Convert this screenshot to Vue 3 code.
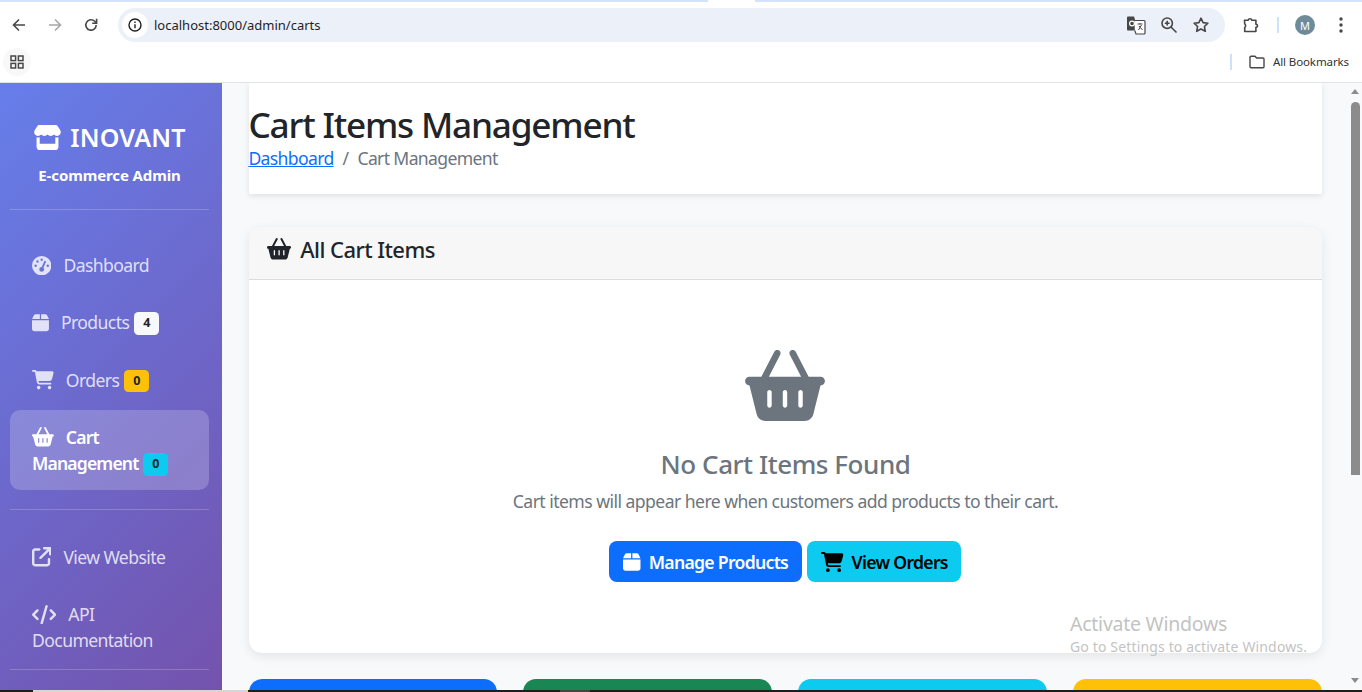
<script setup>
const I = {
  store: { w: 576, d: 'M547.6 103.8L490.3 13.1C485.2 5 476.1 0 466.4 0H109.6C99.9 0 90.8 5 85.7 13.1L28.3 103.8c-29.6 46.8-3.4 111.9 51.9 119.4c4 .5 8.1 .8 12.1 .8c26.1 0 49.3-11.4 65.2-29c15.9 17.6 39.1 29 65.2 29c26.1 0 49.3-11.4 65.2-29c15.9 17.6 39.1 29 65.2 29c26.2 0 49.3-11.4 65.2-29c16 17.6 39.1 29 65.2 29c4.1 0 8.1-.3 12.1-.8c55.5-7.4 81.8-72.5 52.1-119.4zM499.7 254.9l-.1 0c-5.3 .7-10.7 1.1-16.2 1.1c-12.4 0-24.3-1.9-35.4-5.3V384H128V250.6c-11.2 3.5-23.2 5.4-35.6 5.4c-5.5 0-11-.4-16.3-1.1l-.1 0c-4.1-.6-8.1-1.3-12-2.3V384v64c0 35.3 28.7 64 64 64H448c35.3 0 64-28.7 64-64V384 252.6c-4 1-8 1.8-12.3 2.3z' },
  gauge: { w: 512, d: 'M0 256a256 256 0 1 1 512 0A256 256 0 1 1 0 256zM288 96a32 32 0 1 0 -64 0 32 32 0 1 0 64 0zM256 416c35.3 0 64-28.7 64-64c0-17.4-6.9-33.1-18.1-44.6L366 161.7c5.3-12.1-.2-26.3-12.3-31.6s-26.3 .2-31.6 12.3L257.9 288c-.6 0-1.3 0-1.9 0c-35.3 0-64 28.7-64 64s28.7 64 64 64zM176 144a32 32 0 1 0 -64 0 32 32 0 1 0 64 0zM96 288a32 32 0 1 0 0-64 32 32 0 1 0 0 64zm352-32a32 32 0 1 0 -64 0 32 32 0 1 0 64 0z' },
  box: { w: 448, d: 'M50.7 58.5L0 160H208V32H93.7C75.5 32 58.9 42.3 50.7 58.5zM240 160H448L397.3 58.5C389.1 42.3 372.5 32 354.3 32H240V160zm208 32H0V416c0 35.3 28.7 64 64 64H384c35.3 0 64-28.7 64-64V192z' },
  cart: { w: 576, d: 'M0 24C0 10.7 10.7 0 24 0H69.5c22 0 41.5 12.8 50.6 32h411c26.3 0 45.5 25 38.6 50.4l-41 152.3c-8.5 31.4-37 53.3-69.5 53.3H170.7l5.4 28.5c2.2 11.3 12.1 19.5 23.6 19.5H488c13.3 0 24 10.7 24 24s-10.7 24-24 24H199.7c-34.6 0-64.3-24.6-70.7-58.5L77.4 54.5c-.7-3.8-4-6.5-7.9-6.5H24C10.7 48 0 37.3 0 24zM128 464a48 48 0 1 1 96 0 48 48 0 1 1 -96 0zm336-48a48 48 0 1 1 0 96 48 48 0 1 1 0-96z' },
  basket: { w: 576, d: 'M253.3 35.1c6.1-11.8 1.5-26.3-10.2-32.4s-26.3-1.5-32.4 10.2L117.6 192H32c-17.7 0-32 14.3-32 32s14.3 32 32 32L83.9 463.5C91 492 116.6 512 146 512H430c29.4 0 55-20 62.1-48.5L544 256c17.7 0 32-14.3 32-32s-14.3-32-32-32H458.4L365.3 12.9C359.2 1.2 344.7-3.4 332.9 2.7s-16.3 20.6-10.2 32.4L404.3 192H171.7L253.3 35.1zM192 304v96c0 8.8-7.2 16-16 16s-16-7.2-16-16V304c0-8.8 7.2-16 16-16s16 7.2 16 16zm96-16c8.8 0 16 7.2 16 16v96c0 8.8-7.2 16-16 16s-16-7.2-16-16V304c0-8.8 7.2-16 16-16zm128 16v96c0 8.8-7.2 16-16 16s-16-7.2-16-16V304c0-8.8 7.2-16 16-16s16 7.2 16 16z' },
  link: { w: 512, d: 'M320 0c-17.7 0-32 14.3-32 32s14.3 32 32 32h82.7L201.4 265.4c-12.5 12.5-12.5 32.8 0 45.3s32.8 12.5 45.3 0L448 109.3V192c0 17.7 14.3 32 32 32s32-14.3 32-32V32c0-17.7-14.3-32-32-32H320zM80 32C35.8 32 0 67.8 0 112V432c0 44.2 35.8 80 80 80H400c44.2 0 80-35.8 80-80V320c0-17.7-14.3-32-32-32s-32 14.3-32 32V432c0 8.8-7.2 16-16 16H80c-8.8 0-16-7.2-16-16V112c0-8.8 7.2-16 16-16H192c17.7 0 32-14.3 32-32s-14.3-32-32-32H80z' },
  code: { w: 640, d: 'M392.8 1.2c-17-4.9-34.7 5-39.6 22l-128 448c-4.9 17 5 34.7 22 39.6s34.7-5 39.6-22l128-448c4.9-17-5-34.7-22-39.6zm80.6 120.1c-12.5 12.5-12.5 32.8 0 45.3L562.7 256l-89.4 89.4c-12.5 12.5-12.5 32.8 0 45.3s32.8 12.5 45.3 0l112-112c12.5-12.5 12.5-32.8 0-45.3l-112-112c-12.5-12.5-32.8-12.5-45.3 0zm-306.7 0c-12.5-12.5-32.8-12.5-45.3 0l-112 112c-12.5 12.5-12.5 32.8 0 45.3l112 112c12.5 12.5 32.8 12.5 45.3 0s12.5-32.8 0-45.3L77.3 256l89.4-89.4c12.5-12.5 12.5-32.8 0-45.3z' }
}
const mainNav = [
  { label: 'Dashboard', icon: I.gauge },
  { label: 'Products', icon: I.box, badge: '4', tone: 'b-light' },
  { label: 'Orders', icon: I.cart, badge: '0', tone: 'b-warn' },
  { label: 'Cart Management', icon: I.basket, badge: '0', tone: 'b-cyan', active: true }
]
const extraNav = [
  { label: 'View Website', icon: I.link },
  { label: 'API Documentation', icon: I.code }
]
const stats = ['#0d6efd', '#198754', '#0dcaf0', '#ffc107']
</script>

<template>
  <div class="screen">
    <div class="tabstrip"><span class="tabgap"></span></div>
    <div class="toolbar">
      <svg class="tb" width="16" height="16" viewBox="0 0 16 16" fill="none" stroke="#474747" stroke-width="1.6"><path d="M14 8H2.5M8 2.5L2.5 8 8 13.5"/></svg>
      <svg class="tb" width="16" height="16" viewBox="0 0 16 16" fill="none" stroke="#a8a8a8" stroke-width="1.6"><path d="M2 8h11.5M8 2.5L13.5 8 8 13.5"/></svg>
      <svg class="tb" width="16" height="16" viewBox="0 0 16 16" fill="none" stroke="#474747" stroke-width="1.6"><path d="M13.2 8a5.2 5.2 0 1 1-1.5-3.7L13.4 6"/><path d="M13.6 1.8V6.2H9.2" /></svg>
      <div class="omni">
        <span class="info"><svg width="16" height="16" viewBox="0 0 16 16" fill="none" stroke="#1f1f1f" stroke-width="1.4"><circle cx="8" cy="8" r="6"/><path d="M8 7.2v4M8 4.4v1.5"/></svg></span>
        <span class="url">localhost:8000/admin/carts</span>
        <span class="omni-icons">
          <svg width="20" height="20" viewBox="0 0 20 20"><path d="M1 2.5a1 1 0 0 1 1-1h6l4.5 14H2a1 1 0 0 1-1-1z" fill="#474747"/><path d="M8.5 5.5H18a1 1 0 0 1 1 1V18a1 1 0 0 1-1 1H10l-1.2-3.5" fill="#fff" stroke="#474747" stroke-width="1.2"/><circle cx="6" cy="8.5" r="2.4" fill="none" stroke="#fff" stroke-width="1.2"/><path d="M11.5 9h5M14 8v1.2M12.5 15l3-5M13 11l3.5 4" stroke="#474747" stroke-width="1" fill="none"/></svg>
          <svg width="18" height="18" viewBox="0 0 18 18" fill="none" stroke="#474747" stroke-width="1.6"><circle cx="7.2" cy="7.2" r="5.2"/><path d="M11 11l5.5 5.5M7.2 4.8v4.8M4.8 7.2h4.8"/></svg>
          <svg width="18" height="18" viewBox="0 0 18 18" fill="none" stroke="#474747" stroke-width="1.6" stroke-linejoin="round"><path d="M9 2.2l2.1 4.4 4.8.6-3.5 3.3.9 4.8L9 13l-4.3 2.3.9-4.8L2.1 7.2l4.8-.6z"/></svg>
        </span>
      </div>
      <svg class="ext" width="18" height="18" viewBox="0 0 18 18" fill="none" stroke="#474747" stroke-width="1.6" stroke-linejoin="round"><path d="M2.5 4.2h3.6a2 2 0 0 1 3.8 0h4v4a1.6 1.6 0 0 1 0 3.2v4.1H2.7v-4a2 2 0 0 0 .9-2 2 2 0 0 0-.9-1.6z"/></svg>
      <span class="vsep"></span>
      <span class="avatar">M</span>
      <svg class="dots" width="4" height="16" viewBox="0 0 4 16" fill="#474747"><circle cx="2" cy="2" r="1.7"/><circle cx="2" cy="8" r="1.7"/><circle cx="2" cy="14" r="1.7"/></svg>
    </div>
    <div class="bookmarks">
      <span class="apps"><svg width="14" height="14" viewBox="0 0 14 14" fill="none" stroke="#474747" stroke-width="1.5"><rect x="1" y="1" width="4.6" height="4.6"/><rect x="8.4" y="1" width="4.6" height="4.6"/><rect x="1" y="8.4" width="4.6" height="4.6"/><rect x="8.4" y="8.4" width="4.6" height="4.6"/></svg></span>
      <span class="vsep bm"></span>
      <svg width="16" height="14" viewBox="0 0 16 14" fill="none" stroke="#474747" stroke-width="1.4" stroke-linejoin="round"><path d="M1 2.2a1 1 0 0 1 1-1h4l1.6 1.8H14a1 1 0 0 1 1 1v7.8a1 1 0 0 1-1 1H2a1 1 0 0 1-1-1z"/></svg>
      <span class="allbm">All Bookmarks</span>
    </div>

    <div class="page">
      <aside class="sidebar">
        <div class="brand">
          <div class="brand-name"><svg class="ic" :viewBox="`0 0 ${I.store.w} 512`" fill="currentColor"><path :d="I.store.d"/></svg>INOVANT</div>
          <div class="brand-sub">E-commerce Admin</div>
        </div>
        <hr class="rule first" />
        <a v-for="n in mainNav" :key="n.label" class="nav" :class="{ active: n.active }"><svg class="ic" :viewBox="`0 0 ${n.icon.w} 512`" fill="currentColor"><path :d="n.icon.d"/></svg>{{ n.label }} <span v-if="n.badge" class="badge" :class="n.tone">{{ n.badge }}</span></a>
        <hr class="rule" />
        <a v-for="n in extraNav" :key="n.label" class="nav"><svg class="ic" :viewBox="`0 0 ${n.icon.w} 512`" fill="currentColor"><path :d="n.icon.d"/></svg>{{ n.label }}</a>
        <hr class="rule last" />
      </aside>

      <main class="content">
        <header class="head">
          <h1>Cart Items Management</h1>
          <div class="crumbs"><a href="#">Dashboard</a><span class="slash">/</span><span>Cart Management</span></div>
        </header>

        <section class="card">
          <div class="card-head">
            <svg :viewBox="`0 0 ${I.basket.w} 512`" class="h-ic" fill="currentColor"><path :d="I.basket.d"/></svg>
            <span>All Cart Items</span>
          </div>
          <div class="empty">
            <svg class="big" :viewBox="`0 0 ${I.basket.w} 512`" fill="currentColor"><path :d="I.basket.d"/></svg>
            <h2>No Cart Items Found</h2>
            <p>Cart items will appear here when customers add products to their cart.</p>
            <div class="actions">
              <button class="btn primary"><svg class="b-ic" :viewBox="`0 0 ${I.box.w} 512`" fill="currentColor"><path :d="I.box.d"/></svg>Manage Products</button>
              <button class="btn cyan"><svg class="b-ic" :viewBox="`0 0 ${I.cart.w} 512`" fill="currentColor"><path :d="I.cart.d"/></svg>View Orders</button>
            </div>
          </div>
        </section>

        <div class="stats">
          <div v-for="c in stats" :key="c" class="stat" :style="{ background: c }"></div>
        </div>

        <div class="scroll">
          <span class="arrow up"></span>
          <span class="thumb"></span>
          <span class="arrow down"></span>
        </div>
        <div class="watermark">
          <div class="wm1">Activate Windows</div>
          <div class="wm2">Go to Settings to activate Windows.</div>
        </div>
      </main>
    </div>

    <div class="taskbar">
      <span class="tk dark" style="width:33px"></span>
      <span class="tk grey" style="width:215px"></span>
      <span class="tk dark" style="width:312px"></span>
      <span class="tk mid" style="width:30px"></span>
      <span class="tk dark" style="flex:1"></span>
    </div>
  </div>
</template>

<style>
html, body { margin: 0; overflow: hidden; }
</style>

<style scoped>
.screen {
  width: 1362px; height: 692px; display: flex; flex-direction: column; overflow: hidden;
  background: #fff; font-family: "Noto Sans", "Open Sans", sans-serif; color: #212529;
}
.tabstrip { height: 2px; background: #d3e3fd; padding-left: 708px; flex: none; }
.tabgap { display: block; width: 47px; height: 2px; background: #fff; }

.toolbar { height: 46px; flex: none; display: flex; align-items: center; padding: 0 0 0 11px; box-sizing: border-box; }
.tb { margin-right: 20px; flex: none; }
.tb:nth-child(3) { margin-right: 19px; }
.omni { width: 1107px; height: 34px; background: #ebf0f9; border-radius: 17px; display: flex; align-items: center; box-sizing: border-box; padding: 0 15px 0 4px; flex: none; }
.info { width: 26px; height: 26px; border-radius: 50%; background: #fff; display: flex; align-items: center; justify-content: center; }
.url { margin-left: 6px; font-size: 13px; color: #1f1f1f; flex: 1; }
.omni-icons { display: flex; gap: 14px; align-items: center; }
.ext { margin-left: 17px; flex: none; }
.vsep { width: 2px; height: 16px; background: #cfe0fb; margin-left: 17px; flex: none; }
.avatar { width: 20px; height: 20px; margin-left: 16px; border-radius: 50%; background: #6f8b99; color: #fff; font-size: 11px; display: flex; align-items: center; justify-content: center; flex: none; }
.dots { margin-left: 24px; flex: none; }

.bookmarks { height: 28px; flex: none; display: flex; align-items: center; border-bottom: 1px solid #e2e3e4; padding: 0 13px 6px 3px; }
.apps { width: 28px; height: 28px; border-radius: 50%; background: #f8f8f8; display: flex; align-items: center; justify-content: center; margin-right: auto; }
.vsep.bm { margin: 0 17px 0 0; }
.allbm { font-size: 11.5px; margin: 0 0 2px 8px; color: #333; letter-spacing: -.1px; }

.page { flex: 1; min-height: 0; display: flex; }
.sidebar { width: 222px; flex: none; box-sizing: border-box; padding: 0 13px 0 10px; background: linear-gradient(135deg, #667eea 0%, #764ba2 100%) no-repeat; background-size: 100% 750px; overflow: hidden; }
.brand { text-align: center; color: #fff; padding-top: 35px; }
.brand-name { font-size: 25px; font-weight: 600; line-height: 38px; letter-spacing: .2px; }
.brand-name .ic { width: 29px; height: 25px; margin-right: 8px; vertical-align: -3px; }
.brand-sub { font-size: 15px; font-weight: 700; line-height: 21px; margin-top: 9px; letter-spacing: -.12px; }
.rule { border: 0; height: 1px; background: rgba(255,255,255,.2); margin: 0 0 19.5px; }
.rule.first { margin-top: 23px; margin-bottom: 28px; }
.rule.last { margin: -2px 0 0; }
.nav { display: block; padding: 14px 22px; line-height: 26.4px; font-size: 17.6px; letter-spacing: -.6px; color: rgba(255,255,255,.8); margin-bottom: 3px; border-radius: 10px; }
.nav .ic { height: 19.4px; width: auto; margin-right: 12px; vertical-align: -3px; }
.nav.active { background: rgba(255,255,255,.2); color: #fff; font-weight: 600; letter-spacing: -.85px; padding-top: 13.5px; padding-bottom: 13.5px; margin-bottom: 19px; }
.badge { display: inline-block; font-size: 12.5px; font-weight: 700; letter-spacing: 0; line-height: 12.5px; padding: 5px 8px; margin: -4px 0 -4px 1px; min-width: 9px; text-align: center; border-radius: 4.5px; color: #212529; vertical-align: 2px; }
.b-light { background: #f8f9fa; }
.b-warn { background: #ffc107; }
.b-cyan { background: #0dcaf0; }

.content { flex: 1; min-width: 0; position: relative; background: #f8f9fa; padding: 0 40px 0 27px; overflow: hidden; }
.head { background: #fff; height: 111px; box-shadow: 0 2px 6px rgba(0,0,0,.1); box-sizing: border-box; padding-top: 20px; }
h1 { margin: 0 0 1px -.6px; font-size: 35.2px; font-weight: 500; line-height: 42px; letter-spacing: -1.2px; color: #212529; }
.crumbs { margin-left: -.6px; font-size: 17.6px; line-height: 25px; letter-spacing: -.66px; color: #6c757d; }
.crumbs a { color: #0d6efd; text-decoration: underline; }
.slash { margin: 0 9px; }
.card { margin-top: 33px; background: #fff; border-radius: 13px; box-shadow: 0 3px 12px rgba(0,0,0,.09); overflow: hidden; }
.card-head { height: 53px; box-sizing: border-box; background: #f7f7f7; border-bottom: 1px solid #dcdcdc; display: flex; align-items: center; padding: 0 0 8px 17.5px; font-size: 22px; font-weight: 500; letter-spacing: -.55px; color: #212529; }
.h-ic { height: 21.5px; width: auto; margin-right: 9.5px; }
.empty { height: 373px; box-sizing: border-box; padding-top: 70px; display: flex; flex-direction: column; align-items: center; color: #6c757d; }
.big { height: 71px; width: 80px; display: block; margin-right: 1px; }
h2 { margin: 27px 0 0; font-size: 26px; font-weight: 500; line-height: 32px; letter-spacing: -.45px; color: #6c757d; }
p { margin: 8px 0 0; font-size: 17.6px; line-height: 26px; letter-spacing: -.55px; color: #6c757d; }
.actions { margin-top: 27px; margin-right: 1px; display: flex; gap: 5px; }
.btn { height: 41px; border: 0; border-radius: 8px; display: flex; align-items: center; font-family: inherit; font-size: 17.6px; font-weight: 600; letter-spacing: -.7px; padding: 0 14px; }
.btn.primary { background: #0d6efd; color: #fff; }
.btn.cyan { background: #0dcaf0; color: #000; padding-right: 13px; }
.b-ic { height: 20px; width: auto; margin-right: 8px; }
.stats { margin: 26px 0 0 -.4px; display: grid; grid-template-columns: repeat(4, 1fr); gap: 26px; }
.stat { height: 80px; border-radius: 13px; }

.scroll { position: absolute; top: 0; right: 0; width: 11px; height: 100%; }
.thumb { position: absolute; left: 0; top: 19px; width: 9px; height: 373px; border-radius: 5px 5px 0 0; background: #8c8c8c; }
.arrow { position: absolute; left: 0; width: 0; height: 0; border-left: 4.5px solid transparent; border-right: 4.5px solid transparent; }
.arrow.up { top: 6px; border-bottom: 5px solid #8c8c8c; }
.arrow.down { top: 595px; border-top: 5px solid #8c8c8c; }
.watermark { position: absolute; left: 848px; top: 529px; color: #c3c3c3; pointer-events: none; }
.wm1 { font-size: 19.5px; line-height: 24px; letter-spacing: -.25px; }
.wm2 { font-size: 14px; line-height: 20px; letter-spacing: .15px; margin-top: 1px; }

.taskbar { height: 2px; flex: none; display: flex; }
.tk.dark { background: #1d1d1d; }
.tk.grey { background: #d6d6d6; }
.tk.mid { background: #444; }
</style>
